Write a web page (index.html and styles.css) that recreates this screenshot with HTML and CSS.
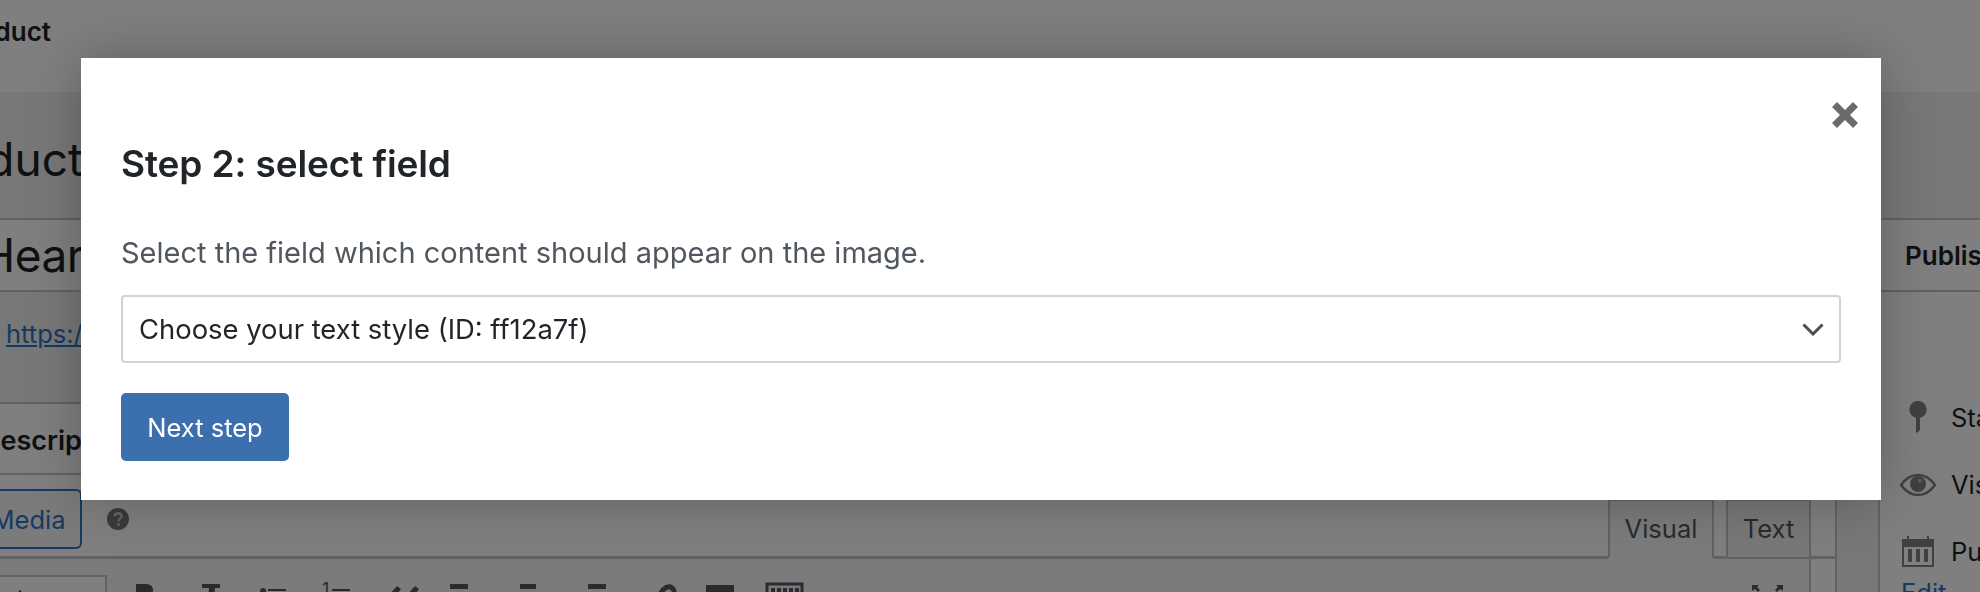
FILE: index.html
```html
<!DOCTYPE html>
<html lang="en">
<head>
<meta charset="utf-8">
<title>Add new product</title>
<link rel="stylesheet" href="styles.css">
</head>
<body>
<div class="page">
  <header class="topbar"><span class="topbar-title">Add new product</span></header>
  <div class="columns">
    <main class="main-col">
      <div class="page-heading"><h1 class="page-title">Add new product</h1></div>
      <div class="title-field"><span class="title-value">Heart necklace</span></div>
      <div class="permalink"><a class="link" href="#">https://example.com/product/heart-necklace</a></div>
      <section class="postbox">
        <h2 class="postbox-title">Description</h2>
        <div class="media-row">
          <button class="media-btn" type="button">Add Media</button>
          <svg class="help-icon" viewBox="0 0 22 22" aria-hidden="true"><circle cx="11" cy="11" r="11" fill="#757575"/><path d="M7.6 8.400c.1-2 1.600-3.100 3.500-3.100 2 0 3.400 1.100 3.400 2.900 0 2.500-3 2.500-3 5" fill="none" stroke="#fff" stroke-opacity=".62" stroke-width="2.400"/><circle cx="11.500" cy="16.400" r="1.500" fill="#fff" fill-opacity=".62"/></svg>
          <div class="tabs">
            <span class="tab tab-active">Visual</span>
            <span class="tab">Text</span>
          </div>
        </div>
        <div class="toolbar">
          <div class="format-select">+</div>
          <svg class="toolbar-icons" viewBox="0 0 1700 40" aria-hidden="true">
            <path class="ti" d="M1 0h9c5 0 8 2 8 6 0 2-1 4-3 5v29H1z"/>
            <path class="ti" d="M67 0h18v4h-5l-3 36h-6l3-36h-7z"/>
            <circle class="ti" cx="128" cy="7" r="3"/><rect class="ti" x="133" y="5" width="18" height="2"/>
            <text class="ti-num" x="187" y="12">1</text><rect class="ti" x="197" y="5" width="18" height="2"/>
            <path class="ti" d="M253 12l9-10 4 3-6 8v27h-7zM271 12l9-10 4 3-6 8v27h-7z"/>
            <rect class="ti" x="315" y="0" width="18" height="5"/>
            <rect class="ti" x="385" y="0" width="16" height="5"/>
            <rect class="ti" x="453" y="0" width="18" height="5"/>
            <path class="ti-line" d="M522 18c0-4 4-10 7-13 3-3 7-3 9 0 2 2 1 5-1 8l-7 8"/>
            <rect class="ti" x="571" y="1" width="28" height="39"/>
            <rect class="ti-box" x="632" y="0" width="35" height="39"/>
            <path class="ti" d="M636 4h4v4h-4zM642 4h4v4h-4zM648 4h4v4h-4zM654 4h4v4h-4zM660 4h4v4h-4z"/>
            <path class="ti" d="M1617 1h7l-2 2 3 3-2 2-3-3-3 2zM1648 1h-7l2 2-3 3 2 2 3-3 3 2z"/>
          </svg>
        </div>
      </section>
    </main>
    <aside class="side-col">
      <section class="publish">
        <h2 class="publish-title">Publish</h2>
        <div class="publish-body">
          <div class="pub-row">
            <svg class="pub-icon" viewBox="0 0 34 32" aria-hidden="true"><path class="pi" d="M17 0a8.500 8.500 0 0 1 2 16.800V29l-3 3-1-1V16.800A8.500 8.500 0 0 1 17 0z"/></svg>
            <span class="pub-text">Status: Draft</span>
          </div>
          <div class="pub-row">
            <svg class="pub-icon" viewBox="0 -1 36 24" aria-hidden="true"><path d="M1 12C6 5 11 2 18 2s12 3 17 10c-5 7-10 10-17 10S6 19 1 12z" fill="none" stroke="#7f8184" stroke-width="2.500"/><circle class="pi" cx="18" cy="11" r="8"/><circle cx="20" cy="8" r="2" fill="#fff" fill-opacity=".45"/></svg>
            <span class="pub-text">Visibility: Public</span>
          </div>
          <div class="pub-row">
            <svg class="pub-icon" viewBox="0 0 32 32" aria-hidden="true"><path class="pi" fill-rule="evenodd" d="M0 4h5V1h2v3h18V1h2v3h5v28H0zM2 12v18h28V12z"/><path class="pi" d="M6 14h4v13H6zM14 14h4v13h-4zM22 14h4v13h-4z"/></svg>
            <span class="pub-text">Publish immediately</span>
          </div>
          <a class="link edit-link" href="#">Edit</a>
        </div>
      </section>
    </aside>
  </div>
</div>
<div class="backdrop"></div>
<div class="modal" role="dialog">
  <button class="modal-close" type="button" aria-label="Close">
    <svg viewBox="0 0 26 26" aria-hidden="true"><path d="M5 0L13 8 21 0 26 5 18 13 26 21 21 26 13 18 5 26 0 21 8 13 0 5z"/></svg>
  </button>
  <h2 class="modal-title">Step 2: select field</h2>
  <p class="modal-text">Select the field which content should appear on the image.</p>
  <div class="select">
    <span class="select-value">Choose your text style (ID: ff12a7f)</span>
    <svg class="select-arrow" viewBox="0 0 22 13" aria-hidden="true"><path d="M1.500 1.500L11 11l9.500-9.500" fill="none" stroke="#4f4f4f" stroke-width="3"/></svg>
  </div>
  <button class="primary-btn" type="button">Next step</button>
</div>
</body>
</html>
```

FILE: styles.css
```css
* { box-sizing: border-box; }
html, body { margin: 0; padding: 0; height: 100%; overflow: hidden; }
body { font-family: Inter, "Liberation Sans", sans-serif; color: #1d2327; background: #f0f0f1; }
h1, h2, p { margin: 0; font: inherit; }
.link { color: #2f74c4; text-decoration: underline; }

.page { height: 592px; overflow: hidden; white-space: nowrap; }
.topbar { height: 92px; background: #fff; display: flex; align-items: flex-start; }
.topbar-title { width: 51px; display: flex; justify-content: flex-end; font-size: 26px; font-weight: 600; line-height: 30px; margin-top: 17px; }

.columns { display: flex; align-items: flex-start; }
.main-col { width: 1837px; flex: none; }
.side-col { margin-left: 41px; flex: 1; }

.page-heading { height: 126px; width: 83px; display: flex; justify-content: flex-end; }
.page-title { font-size: 46px; line-height: 56px; margin-top: 39px; font-weight: 400; }
.title-field { height: 74px; background: #fff; border-top: 2px solid #c3c4c7; border-bottom: 2px solid #c3c4c7; overflow: hidden; }
.title-value { display: block; font-size: 46px; letter-spacing: -.5px; line-height: 70px; margin-left: -19px; }
.permalink { height: 110px; padding: 26px 0 0 6px; font-size: 25.500px; line-height: 32px; }

.postbox { background: #fff; border-top: 2px solid #c3c4c7; border-right: 2px solid #c3c4c7; height: 190px; }
.postbox-title { height: 71px; margin-left: -19px; border-bottom: 2px solid #c3c4c7; font-size: 27px; font-weight: 600; line-height: 74px; }
.media-row { height: 84px; display: flex; align-items: flex-start; border-bottom: 3px solid #c3c4c7; position: relative; }
.media-btn { width: 164px; height: 60px; margin: 14px 0 0 -82px; border: 2px solid #2f74c4; border-radius: 6px; background: #f6f7f7; color: #2f74c4; font: 25.500px Inter, sans-serif; padding: 0 0 0 1px; }
.help-icon { width: 22px; height: 22px; margin: 33px 0 0 25px; flex: none; }
.tabs { margin-left: auto; margin-right: 24px; display: flex; gap: 12px; align-self: flex-end; margin-bottom: -3px; }
.tab { height: 60px; width: 85px; display: flex; justify-content: center; align-items: center; border: 2px solid #c3c4c7; background: #f0f0f1; color: #50575e; font-size: 25.500px; padding-bottom: 2px; }
.tab-active { width: 106px; background: #f6f7f7; border-bottom-color: #f6f7f7; }

.toolbar { background: #f6f7f7; height: 60px; margin-right: 24px; border-right: 2px solid #c3c4c7; position: relative; padding-top: 16px; }
.format-select { position: absolute; left: -20px; top: 16px; width: 127px; height: 40px; border: 2px solid #c3c4c7; padding-left: 30px; line-height: 36px; font-size: 24px; background: #fff; }
.toolbar-icons { display: block; width: 1700px; height: 40px; margin: 9px 0 0 135px; overflow: visible; }
.ti { fill: #50575e; }
.ti-num { font-size: 18px; fill: #50575e; font-family: Inter, sans-serif; }
.ti-line { fill: none; stroke: #50575e; stroke-width: 5; }
.ti-box { fill: none; stroke: #50575e; stroke-width: 3; }

.publish { background: #fff; border-left: 2px solid #c3c4c7; margin-top: 126px; height: 374px; }
.publish-title { height: 74px; border-top: 2px solid #c3c4c7; border-bottom: 2px solid #c3c4c7; padding-left: 25px; font-size: 26px; font-weight: 600; line-height: 72px; }
.publish-body { padding: 108px 0 0 20px; display: flex; flex-direction: column; gap: 33px; }
.pub-row { display: flex; align-items: center; height: 34px; }
.pub-icon { width: 36px; height: 32px; flex: none; }
.pub-text { margin-left: 15px; font-size: 25.500px; }
.pi { fill: #7f8184; }
.edit-link { font-size: 25.500px; margin-top: -23px; line-height: 30px; margin-left: 1px; }

.backdrop { position: fixed; inset: 0; background: rgba(0,0,0,.5); }
.modal { position: absolute; left: 81px; top: 58px; width: 1800px; height: 442px; background: #fff; padding: 84px 40px 0; box-shadow: 0 0 50px rgba(0,0,0,.25); }
.modal-close { position: absolute; top: 44px; right: 23px; width: 26px; height: 26px; padding: 0; border: 0; background: none; }
.modal-close svg { display: block; width: 26px; height: 26px; fill: #6b6b6b; }
.modal-title { font-size: 37px; letter-spacing: -.1px; font-weight: 600; line-height: 44px; color: #212529; }
.modal-text { margin-top: 47px; font-size: 29px; line-height: 40px; color: #50575e; }
.select { margin-top: 22px; height: 68px; border: 2px solid #ced4da; border-radius: 4px; display: flex; align-items: center; justify-content: space-between; padding: 0 15px 0 16px; font-size: 27.400px; color: #212529; }
.select-arrow { width: 22px; height: 13px; }
.primary-btn { display: block; margin-top: 30px; width: 168px; height: 68px; border: 0; border-radius: 5px; background: #3c6fad; color: #fff; font: 25.500px Inter, sans-serif; padding: 0; }
```
